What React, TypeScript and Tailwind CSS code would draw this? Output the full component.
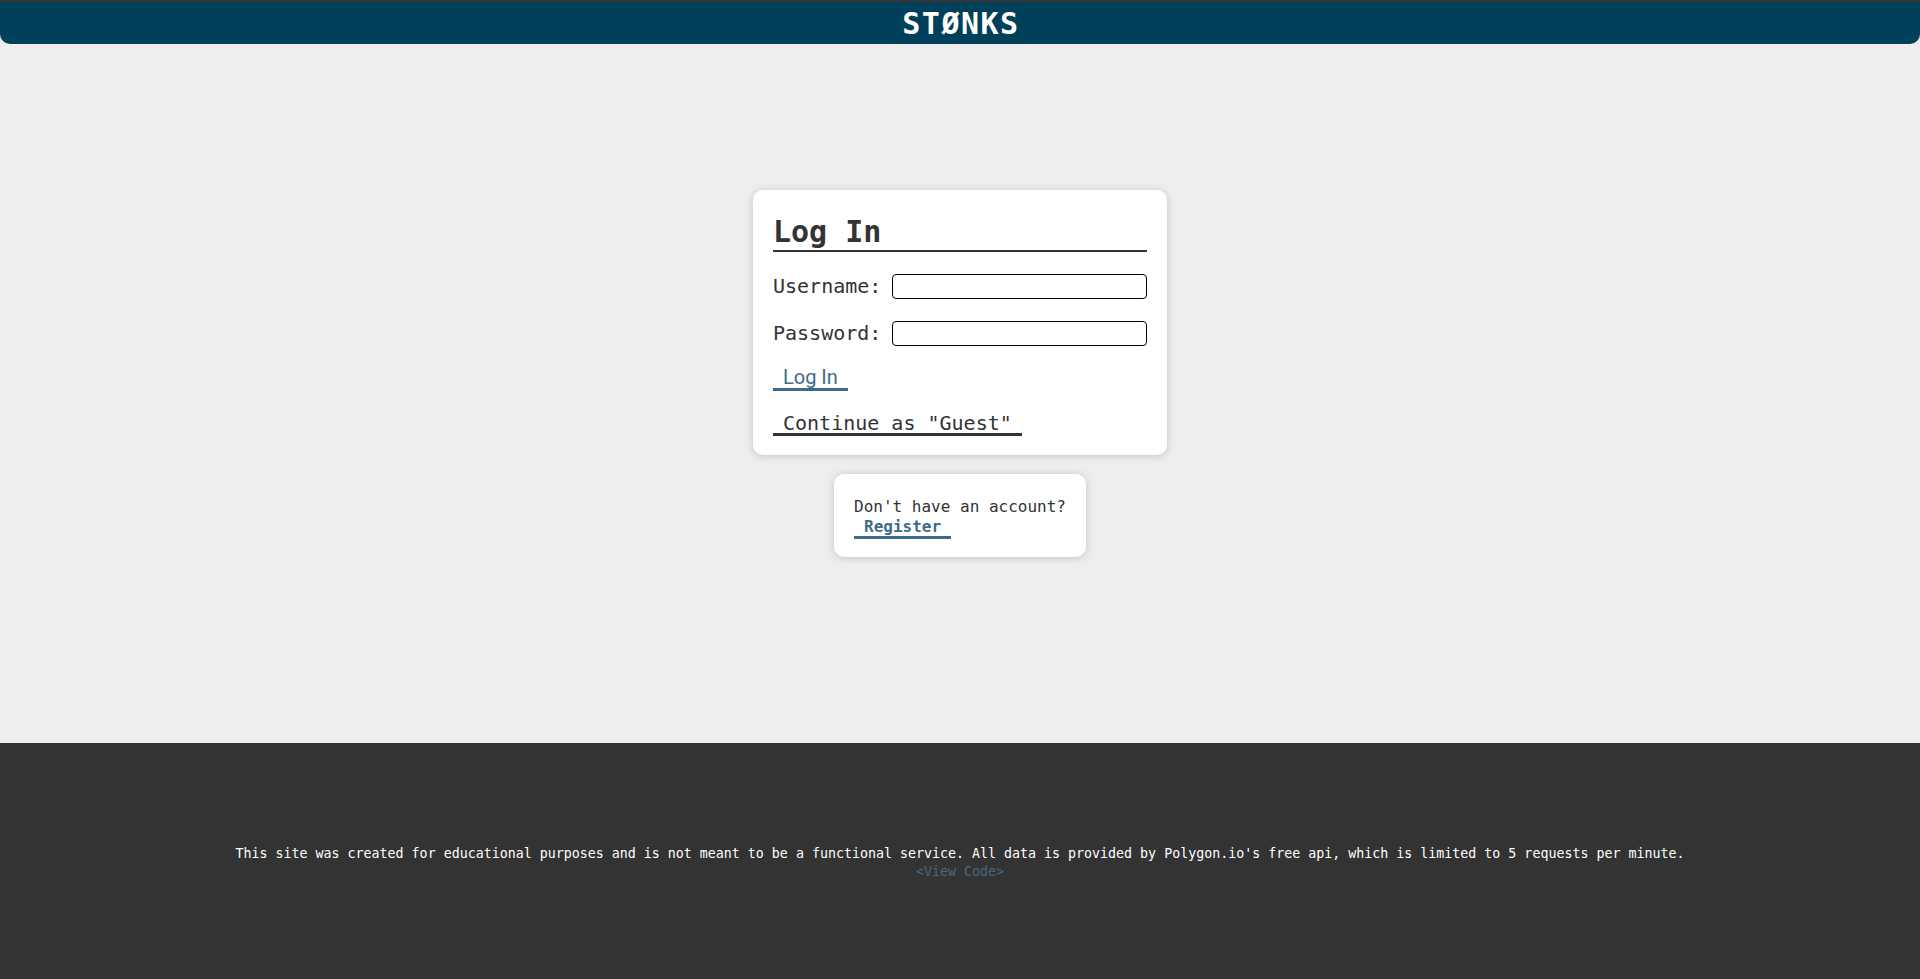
import React from 'react';

const mono = { fontFamily: '"DejaVu Sans Mono", "Liberation Mono", monospace' };

function Header() {
    return (
        <div>
            <div className="h-[2px] bg-[#353535]" />
            <header className="h-[42px] bg-[#01405a] rounded-b-[10px] flex items-center justify-center">
                <h1 className="text-white text-[30px] leading-none font-bold tracking-[1.5px] pl-[2px] mt-[2px]" style={mono}>
                    STØNKS
                </h1>
            </header>
        </div>
    );
}

function LoginCard() {
    return (
        <form
            className="w-[414px] bg-white rounded-[10px] shadow-[0_1px_8px_rgba(0,0,0,0.18)] pt-[24px] px-[20px] pb-[19px] flex flex-col text-[#333]"
            style={mono}
            onSubmit={(e) => e.preventDefault()}
        >
            <h2 className="text-[30px] leading-[36px] font-bold border-b-2 border-[#333]">Log In</h2>
            <label className="mt-[22px] flex items-center gap-[11px] text-[20px] leading-[25px]">
                <span>Username:</span>
                <input type="text" className="flex-1 h-[25px] border border-black rounded-[4px] px-1 text-[16px]" />
            </label>
            <label className="mt-[22px] flex items-center gap-[11px] text-[20px] leading-[25px]">
                <span>Password:</span>
                <input type="password" className="flex-1 h-[25px] border border-black rounded-[4px] px-1 text-[16px]" />
            </label>
            <div className="mt-[20px] flex">
                <button
                    type="submit"
                    className="px-[10px] text-[20px] leading-[22px] text-[#3e6b88] border-b-[3px] border-[#3e6b88]"
                    style={{ fontFamily: 'Roboto, "Liberation Sans", sans-serif' }}
                >
                    Log In
                </button>
            </div>
            <div className="mt-[22px] flex">
                <button type="button" className="px-[10px] text-[20px] leading-[20px] text-[#333] border-b-[3px] border-[#333]">
                    Continue as "Guest"
                </button>
            </div>
        </form>
    );
}

function RegisterCard() {
    return (
        <div
            className="w-[252px] bg-white rounded-[10px] shadow-[0_1px_8px_rgba(0,0,0,0.18)] pt-[23px] pb-[18px] flex flex-col items-center text-[16px] leading-[19px] text-[#333]"
            style={mono}
        >
            <div>
                <p className="whitespace-nowrap">Don't have an account?</p>
                <div className="flex mt-[1px]">
                    <a className="cursor-pointer px-[10px] font-bold text-[#3e6b88] border-b-[3px] border-[#3e6b88]">Register</a>
                </div>
            </div>
        </div>
    );
}

function Footer() {
    return (
        <footer className="h-[236px] bg-[#333333] flex flex-col items-center justify-center pt-[4px] text-[13.3px] leading-[18px]" style={mono}>
            <p className="text-white">
                This site was created for educational purposes and is not meant to be a functional service. All data is provided by Polygon.io's free api, which is limited to 5 requests per minute.
            </p>
            <a className="text-[#4a6781] cursor-pointer">&lt;View Code&gt;</a>
        </footer>
    );
}

export default function App() {
    return (
        <div className="min-h-screen bg-[#eeeeee] flex flex-col">
            <Header />
            <main className="h-[699px] flex flex-col items-center pt-[146px] gap-[19px]">
                <LoginCard />
                <RegisterCard />
            </main>
            <Footer />
        </div>
    );
}
